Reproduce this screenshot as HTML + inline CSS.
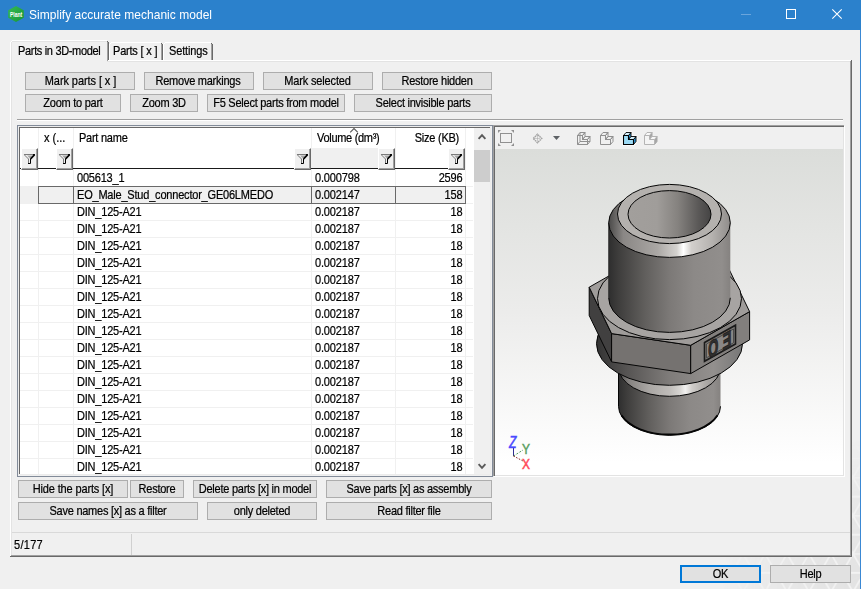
<!DOCTYPE html>
<html><head><meta charset="utf-8"><title>Simplify accurate mechanic model</title>
<style>
html,body{margin:0;padding:0;}
body{width:861px;height:589px;overflow:hidden;background:#f0f0f0;font-family:"Liberation Sans",sans-serif;font-size:11px;color:#000;position:relative;}
#w{position:absolute;left:0;top:0;width:861px;height:589px;overflow:hidden;background:#f0f0f0;}
#w div{position:absolute;box-sizing:content-box;}
#w svg{position:absolute;overflow:visible;}
.btn{background:#e1e1e1;border:1px solid #adadad;color:#000;}
.tx{line-height:13px;font-size:11px;white-space:pre;}
.t{display:inline-block;line-height:13px;transform:scaleY(1.19);transform-origin:0 10px;-webkit-text-stroke:0.2px currentColor;}
.fb{background:#f0f0f0;border-top:1px solid #fff;border-left:1px solid #fff;border-right:1px solid #696969;border-bottom:1px solid #696969;}
.fb:after{content:"";position:absolute;left:0;top:0;right:0;bottom:0;border-right:1px solid #a0a0a0;border-bottom:1px solid #a0a0a0;}
</style></head><body><div id="w">

<div style="left:0px;top:0px;width:861px;height:30px;background:#2b81cc;"></div>
<div style="left:860px;top:30px;width:1px;height:559px;background:#3a88d4;"></div>
<svg style="left:7px;top:5px" width="18" height="18" viewBox="0 0 18 18"><defs><linearGradient id="ig" x1="0" y1="0" x2="1" y2="1"><stop offset="0" stop-color="#36bb52"/><stop offset="1" stop-color="#169638"/></linearGradient></defs><polygon points="9,1 16.8,5.2 16.8,12.8 9,17 1.2,12.8 1.2,5.2" fill="url(#ig)"/><text x="3" y="11.9" font-family="Liberation Sans, sans-serif" font-size="6.4" font-weight="bold" fill="#fff" textLength="12.2" lengthAdjust="spacingAndGlyphs">Plant</text></svg>
<div class="tx" style="left:29px;top:8px;height:14px;font-size:12px;line-height:14px;letter-spacing:0.03px;color:#fff"><span class="t" style="line-height:14px;transform:scaleY(1.12);transform-origin:0 11px;-webkit-text-stroke:0">Simplify accurate mechanic model</span></div>
<div style="left:741px;top:14px;width:10px;height:1px;background:#6aa5dc;"></div>
<div style="left:786px;top:9px;width:8px;height:8px;border:1px solid #fff"></div>
<svg style="left:832px;top:9px" width="10" height="10" viewBox="0 0 10 10"><path d="M0.3,0.3 L9.7,9.7 M9.7,0.3 L0.3,9.7" stroke="#fff" stroke-width="1.1" fill="none"/></svg>
<svg style="left:721px;top:439px" width="139" height="150" viewBox="0 0 139 150"><defs><radialGradient id="wm" cx="1" cy="1" r="1"><stop offset="0" stop-color="#fff" stop-opacity="1"/><stop offset="0.55" stop-color="#fff" stop-opacity="0.6"/><stop offset="1" stop-color="#fff" stop-opacity="0"/></radialGradient><mask id="wmm"><rect width="139" height="150" fill="url(#wm)"/></mask><pattern id="tri" width="22" height="38.1" patternUnits="userSpaceOnUse"><path d="M0,0.5 H22 M0,19.55 H22 M0,0.5 L11,19.55 L22,0.5 M0,38.6 L11,19.55 L22,38.6" stroke="#f2f2f2" stroke-width="1.8" fill="none"/></pattern></defs><g mask="url(#wmm)"><rect width="139" height="150" fill="#e2e2e2"/><rect width="139" height="150" fill="url(#tri)"/></g></svg>
<div style="left:12px;top:62px;width:838px;height:493px;background:#f0f0f0;"></div>
<div style="left:10px;top:60px;width:841px;height:1px;background:#fff;"></div>
<div style="left:11px;top:61px;width:839px;height:1px;background:#e3e3e3;"></div>
<div style="left:10px;top:60px;width:1px;height:496px;background:#fff;"></div>
<div style="left:11px;top:61px;width:1px;height:494px;background:#e3e3e3;"></div>
<div style="left:850px;top:61px;width:1px;height:495px;background:#a0a0a0;"></div>
<div style="left:851px;top:60px;width:1px;height:497px;background:#696969;"></div>
<div style="left:11px;top:555px;width:840px;height:1px;background:#a0a0a0;"></div>
<div style="left:10px;top:556px;width:842px;height:1px;background:#696969;"></div>
<div style="left:10px;top:42px;width:1px;height:19px;background:#fff;"></div>
<div style="left:11px;top:41px;width:1px;height:1px;background:#fff;"></div>
<div style="left:12px;top:40px;width:95px;height:1px;background:#fff;"></div>
<div style="left:11px;top:42px;width:1px;height:20px;background:#e3e3e3;"></div>
<div style="left:12px;top:41px;width:95px;height:1px;background:#e3e3e3;"></div>
<div style="left:107px;top:42px;width:1px;height:19px;background:#a0a0a0;"></div>
<div style="left:108px;top:42px;width:1px;height:18px;background:#696969;"></div>
<div style="left:107px;top:41px;width:1px;height:1px;background:#696969;"></div>
<div style="left:12px;top:42px;width:95px;height:20px;background:#f0f0f0;"></div>
<div class="tx" style="left:18px;top:45px;height:13px;letter-spacing:-0.33px;color:#000;"><span class="t">Parts in 3D-model</span></div>
<div style="left:109px;top:44px;width:1px;height:16px;background:#fff;"></div>
<div style="left:110px;top:43px;width:1px;height:1px;background:#fff;"></div>
<div style="left:111px;top:42px;width:50px;height:1px;background:#fff;"></div>
<div style="left:161px;top:44px;width:1px;height:16px;background:#a0a0a0;"></div>
<div style="left:162px;top:44px;width:1px;height:16px;background:#696969;"></div>
<div style="left:161px;top:43px;width:1px;height:1px;background:#696969;"></div>
<div class="tx" style="left:113px;top:45px;height:13px;letter-spacing:-0.2px;color:#000;"><span class="t">Parts [ x ]</span></div>
<div style="left:163px;top:44px;width:1px;height:16px;background:#fff;"></div>
<div style="left:164px;top:43px;width:1px;height:1px;background:#fff;"></div>
<div style="left:165px;top:42px;width:46px;height:1px;background:#fff;"></div>
<div style="left:211px;top:44px;width:1px;height:16px;background:#a0a0a0;"></div>
<div style="left:212px;top:44px;width:1px;height:16px;background:#696969;"></div>
<div style="left:211px;top:43px;width:1px;height:1px;background:#696969;"></div>
<div class="tx" style="left:169px;top:45px;height:13px;letter-spacing:-0.15px;color:#000;"><span class="t">Settings</span></div>
<div class="btn" style="left:25px;top:72px;width:108px;height:16px;border:1px solid #adadad"><div class="tx" style="left:0.5px;top:2px;width:100%;height:13px;text-align:center;letter-spacing:-0.08px"><span class="t">Mark parts [ x ]</span></div></div>
<div class="btn" style="left:144px;top:72px;width:108px;height:16px;border:1px solid #adadad"><div class="tx" style="left:-1px;top:2px;width:100%;height:13px;text-align:center;letter-spacing:-0.25px"><span class="t">Remove markings</span></div></div>
<div class="btn" style="left:263px;top:72px;width:108px;height:16px;border:1px solid #adadad"><div class="tx" style="left:-0.5px;top:2px;width:100%;height:13px;text-align:center;letter-spacing:-0.15px"><span class="t">Mark selected</span></div></div>
<div class="btn" style="left:382px;top:72px;width:108px;height:16px;border:1px solid #adadad"><div class="tx" style="left:0px;top:2px;width:100%;height:13px;text-align:center;letter-spacing:-0.25px"><span class="t">Restore hidden</span></div></div>
<div class="btn" style="left:25px;top:94px;width:94px;height:16px;border:1px solid #adadad"><div class="tx" style="left:0px;top:2px;width:100%;height:13px;text-align:center;letter-spacing:-0.25px"><span class="t">Zoom to part</span></div></div>
<div class="btn" style="left:130px;top:94px;width:66px;height:16px;border:1px solid #adadad"><div class="tx" style="left:0px;top:2px;width:100%;height:13px;text-align:center;letter-spacing:-0.25px"><span class="t">Zoom 3D</span></div></div>
<div class="btn" style="left:207px;top:94px;width:136px;height:16px;border:1px solid #adadad"><div class="tx" style="left:0px;top:2px;width:100%;height:13px;text-align:center;letter-spacing:-0.25px"><span class="t">F5 Select parts from model</span></div></div>
<div class="btn" style="left:354px;top:94px;width:136px;height:16px;border:1px solid #adadad"><div class="tx" style="left:0px;top:2px;width:100%;height:13px;text-align:center;letter-spacing:-0.25px"><span class="t">Select invisible parts</span></div></div>
<div style="left:17px;top:119px;width:826px;height:1px;background:#a0a0a0;"></div>
<div style="left:17px;top:120px;width:826px;height:1px;background:#fff;"></div>
<div style="left:17px;top:125px;width:474px;height:350px;border:1px solid #828b99;background:#f0f0f0"></div>
<div style="left:18px;top:126px;width:473px;height:349px;background:#ececec;"></div>
<div style="left:19px;top:127px;width:471px;height:347px;background:#696969;"></div>
<div style="left:20px;top:128px;width:470px;height:346px;background:#fff;"></div>
<div id="g" style="left:20px;top:128px;width:470px;height:346px;overflow:hidden;background:#fff">
<div style="left:18px;top:0px;width:1px;height:346px;background:#f0f0f0;"></div>
<div style="left:53px;top:0px;width:1px;height:346px;background:#f0f0f0;"></div>
<div style="left:291px;top:0px;width:1px;height:346px;background:#f0f0f0;"></div>
<div style="left:375px;top:0px;width:1px;height:346px;background:#f0f0f0;"></div>
<div style="left:445px;top:0px;width:1px;height:346px;background:#f0f0f0;"></div>
<div style="left:0px;top:58px;width:453px;height:1px;background:#f0f0f0;"></div>
<div style="left:0px;top:75px;width:453px;height:1px;background:#f0f0f0;"></div>
<div style="left:0px;top:92px;width:453px;height:1px;background:#f0f0f0;"></div>
<div style="left:0px;top:109px;width:453px;height:1px;background:#f0f0f0;"></div>
<div style="left:0px;top:126px;width:453px;height:1px;background:#f0f0f0;"></div>
<div style="left:0px;top:143px;width:453px;height:1px;background:#f0f0f0;"></div>
<div style="left:0px;top:160px;width:453px;height:1px;background:#f0f0f0;"></div>
<div style="left:0px;top:177px;width:453px;height:1px;background:#f0f0f0;"></div>
<div style="left:0px;top:194px;width:453px;height:1px;background:#f0f0f0;"></div>
<div style="left:0px;top:211px;width:453px;height:1px;background:#f0f0f0;"></div>
<div style="left:0px;top:228px;width:453px;height:1px;background:#f0f0f0;"></div>
<div style="left:0px;top:245px;width:453px;height:1px;background:#f0f0f0;"></div>
<div style="left:0px;top:262px;width:453px;height:1px;background:#f0f0f0;"></div>
<div style="left:0px;top:279px;width:453px;height:1px;background:#f0f0f0;"></div>
<div style="left:0px;top:296px;width:453px;height:1px;background:#f0f0f0;"></div>
<div style="left:0px;top:313px;width:453px;height:1px;background:#f0f0f0;"></div>
<div style="left:0px;top:330px;width:453px;height:1px;background:#f0f0f0;"></div>
<div style="left:0px;top:347px;width:453px;height:1px;background:#f0f0f0;"></div>
<div style="left:291px;top:20px;width:84px;height:21px;background:#f0f0f0;"></div>
<div style="left:0px;top:40px;width:429px;height:1px;background:#1a1a1a;"></div>
<div class="fb" style="left:1px;top:20px;width:15px;height:20px"><svg style="left:2px;top:5px" width="12" height="11" viewBox="0 0 12 11"><polygon points="3.2,1.5 8.6,1.5 5.8,4.4" fill="#a6a6a6"/><path d="M0,0.5 H9.5 M0.4,0.9 L4.5,5 V9.5" fill="none" stroke="#7a7a7a" stroke-width="1"/><path d="M9,0.5 H11" stroke="#111" stroke-width="1" fill="none"/><path d="M10.6,0.6 L6.6,4.8" stroke="#000" stroke-width="1.7" fill="none"/><path d="M6.5,4.5 V9.5 H4" stroke="#000" stroke-width="1" fill="none"/></svg></div>
<div class="fb" style="left:36px;top:20px;width:15px;height:20px"><svg style="left:2px;top:5px" width="12" height="11" viewBox="0 0 12 11"><polygon points="3.2,1.5 8.6,1.5 5.8,4.4" fill="#a6a6a6"/><path d="M0,0.5 H9.5 M0.4,0.9 L4.5,5 V9.5" fill="none" stroke="#7a7a7a" stroke-width="1"/><path d="M9,0.5 H11" stroke="#111" stroke-width="1" fill="none"/><path d="M10.6,0.6 L6.6,4.8" stroke="#000" stroke-width="1.7" fill="none"/><path d="M6.5,4.5 V9.5 H4" stroke="#000" stroke-width="1" fill="none"/></svg></div>
<div class="fb" style="left:274px;top:20px;width:15px;height:20px"><svg style="left:2px;top:5px" width="12" height="11" viewBox="0 0 12 11"><polygon points="3.2,1.5 8.6,1.5 5.8,4.4" fill="#a6a6a6"/><path d="M0,0.5 H9.5 M0.4,0.9 L4.5,5 V9.5" fill="none" stroke="#7a7a7a" stroke-width="1"/><path d="M9,0.5 H11" stroke="#111" stroke-width="1" fill="none"/><path d="M10.6,0.6 L6.6,4.8" stroke="#000" stroke-width="1.7" fill="none"/><path d="M6.5,4.5 V9.5 H4" stroke="#000" stroke-width="1" fill="none"/></svg></div>
<div class="fb" style="left:358px;top:20px;width:15px;height:20px"><svg style="left:2px;top:5px" width="12" height="11" viewBox="0 0 12 11"><polygon points="3.2,1.5 8.6,1.5 5.8,4.4" fill="#a6a6a6"/><path d="M0,0.5 H9.5 M0.4,0.9 L4.5,5 V9.5" fill="none" stroke="#7a7a7a" stroke-width="1"/><path d="M9,0.5 H11" stroke="#111" stroke-width="1" fill="none"/><path d="M10.6,0.6 L6.6,4.8" stroke="#000" stroke-width="1.7" fill="none"/><path d="M6.5,4.5 V9.5 H4" stroke="#000" stroke-width="1" fill="none"/></svg></div>
<div class="fb" style="left:428px;top:20px;width:15px;height:20px"><svg style="left:2px;top:5px" width="12" height="11" viewBox="0 0 12 11"><polygon points="3.2,1.5 8.6,1.5 5.8,4.4" fill="#a6a6a6"/><path d="M0,0.5 H9.5 M0.4,0.9 L4.5,5 V9.5" fill="none" stroke="#7a7a7a" stroke-width="1"/><path d="M9,0.5 H11" stroke="#111" stroke-width="1" fill="none"/><path d="M10.6,0.6 L6.6,4.8" stroke="#000" stroke-width="1.7" fill="none"/><path d="M6.5,4.5 V9.5 H4" stroke="#000" stroke-width="1" fill="none"/></svg></div>
<div class="tx" style="left:24px;top:4px;height:13px;letter-spacing:0px;color:#000;"><span class="t">x (...</span></div>
<div class="tx" style="left:59px;top:4px;height:13px;letter-spacing:-0.25px;color:#000;"><span class="t">Part name</span></div>
<div class="tx" style="left:297px;top:4px;height:13px;letter-spacing:-0.3px;color:#000;"><span class="t">Volume (dm³)</span></div>
<div class="tx" style="left:380px;top:4px;height:13px;letter-spacing:-0.25px;color:#000;width:59px;text-align:right;"><span class="t">Size (KB)</span></div>
<svg style="left:329px;top:-1px" width="10" height="6" viewBox="0 0 10 6"><path d="M1.2,5.3 L5,1.5 L8.8,5.3" fill="none" stroke="#5a5a5a" stroke-width="1.1"/></svg>
<div class="tx" style="left:57px;top:44px;height:13px;letter-spacing:-0.2px;color:#000;"><span class="t">005613_1</span></div>
<div class="tx" style="left:295px;top:44px;height:13px;letter-spacing:-0.15px;color:#000;"><span class="t">0.000798</span></div>
<div class="tx" style="left:380px;top:44px;height:13px;letter-spacing:-0.15px;color:#000;width:62.5px;text-align:right;"><span class="t">2596</span></div>
<div style="left:0px;top:58px;width:18px;height:18px;background:#f0f0f0;"></div>
<div style="left:18px;top:58px;width:426px;height:16px;border:1px solid #696969;background:#f0f0f0"></div>
<div style="left:53px;top:59px;width:1px;height:16px;background:#696969;"></div>
<div style="left:291px;top:59px;width:1px;height:16px;background:#696969;"></div>
<div style="left:375px;top:59px;width:1px;height:16px;background:#696969;"></div>
<div class="tx" style="left:57px;top:61px;height:13px;letter-spacing:-0.2px;color:#000;"><span class="t">EO_Male_Stud_connector_GE06LMEDO</span></div>
<div class="tx" style="left:295px;top:61px;height:13px;letter-spacing:-0.15px;color:#000;"><span class="t">0.002147</span></div>
<div class="tx" style="left:380px;top:61px;height:13px;letter-spacing:-0.15px;color:#000;width:62.5px;text-align:right;"><span class="t">158</span></div>
<div class="tx" style="left:57px;top:78px;height:13px;letter-spacing:-0.2px;color:#000;"><span class="t">DIN_125-A21</span></div>
<div class="tx" style="left:295px;top:78px;height:13px;letter-spacing:-0.15px;color:#000;"><span class="t">0.002187</span></div>
<div class="tx" style="left:380px;top:78px;height:13px;letter-spacing:-0.15px;color:#000;width:62.5px;text-align:right;"><span class="t">18</span></div>
<div class="tx" style="left:57px;top:95px;height:13px;letter-spacing:-0.2px;color:#000;"><span class="t">DIN_125-A21</span></div>
<div class="tx" style="left:295px;top:95px;height:13px;letter-spacing:-0.15px;color:#000;"><span class="t">0.002187</span></div>
<div class="tx" style="left:380px;top:95px;height:13px;letter-spacing:-0.15px;color:#000;width:62.5px;text-align:right;"><span class="t">18</span></div>
<div class="tx" style="left:57px;top:112px;height:13px;letter-spacing:-0.2px;color:#000;"><span class="t">DIN_125-A21</span></div>
<div class="tx" style="left:295px;top:112px;height:13px;letter-spacing:-0.15px;color:#000;"><span class="t">0.002187</span></div>
<div class="tx" style="left:380px;top:112px;height:13px;letter-spacing:-0.15px;color:#000;width:62.5px;text-align:right;"><span class="t">18</span></div>
<div class="tx" style="left:57px;top:129px;height:13px;letter-spacing:-0.2px;color:#000;"><span class="t">DIN_125-A21</span></div>
<div class="tx" style="left:295px;top:129px;height:13px;letter-spacing:-0.15px;color:#000;"><span class="t">0.002187</span></div>
<div class="tx" style="left:380px;top:129px;height:13px;letter-spacing:-0.15px;color:#000;width:62.5px;text-align:right;"><span class="t">18</span></div>
<div class="tx" style="left:57px;top:146px;height:13px;letter-spacing:-0.2px;color:#000;"><span class="t">DIN_125-A21</span></div>
<div class="tx" style="left:295px;top:146px;height:13px;letter-spacing:-0.15px;color:#000;"><span class="t">0.002187</span></div>
<div class="tx" style="left:380px;top:146px;height:13px;letter-spacing:-0.15px;color:#000;width:62.5px;text-align:right;"><span class="t">18</span></div>
<div class="tx" style="left:57px;top:163px;height:13px;letter-spacing:-0.2px;color:#000;"><span class="t">DIN_125-A21</span></div>
<div class="tx" style="left:295px;top:163px;height:13px;letter-spacing:-0.15px;color:#000;"><span class="t">0.002187</span></div>
<div class="tx" style="left:380px;top:163px;height:13px;letter-spacing:-0.15px;color:#000;width:62.5px;text-align:right;"><span class="t">18</span></div>
<div class="tx" style="left:57px;top:180px;height:13px;letter-spacing:-0.2px;color:#000;"><span class="t">DIN_125-A21</span></div>
<div class="tx" style="left:295px;top:180px;height:13px;letter-spacing:-0.15px;color:#000;"><span class="t">0.002187</span></div>
<div class="tx" style="left:380px;top:180px;height:13px;letter-spacing:-0.15px;color:#000;width:62.5px;text-align:right;"><span class="t">18</span></div>
<div class="tx" style="left:57px;top:197px;height:13px;letter-spacing:-0.2px;color:#000;"><span class="t">DIN_125-A21</span></div>
<div class="tx" style="left:295px;top:197px;height:13px;letter-spacing:-0.15px;color:#000;"><span class="t">0.002187</span></div>
<div class="tx" style="left:380px;top:197px;height:13px;letter-spacing:-0.15px;color:#000;width:62.5px;text-align:right;"><span class="t">18</span></div>
<div class="tx" style="left:57px;top:214px;height:13px;letter-spacing:-0.2px;color:#000;"><span class="t">DIN_125-A21</span></div>
<div class="tx" style="left:295px;top:214px;height:13px;letter-spacing:-0.15px;color:#000;"><span class="t">0.002187</span></div>
<div class="tx" style="left:380px;top:214px;height:13px;letter-spacing:-0.15px;color:#000;width:62.5px;text-align:right;"><span class="t">18</span></div>
<div class="tx" style="left:57px;top:231px;height:13px;letter-spacing:-0.2px;color:#000;"><span class="t">DIN_125-A21</span></div>
<div class="tx" style="left:295px;top:231px;height:13px;letter-spacing:-0.15px;color:#000;"><span class="t">0.002187</span></div>
<div class="tx" style="left:380px;top:231px;height:13px;letter-spacing:-0.15px;color:#000;width:62.5px;text-align:right;"><span class="t">18</span></div>
<div class="tx" style="left:57px;top:248px;height:13px;letter-spacing:-0.2px;color:#000;"><span class="t">DIN_125-A21</span></div>
<div class="tx" style="left:295px;top:248px;height:13px;letter-spacing:-0.15px;color:#000;"><span class="t">0.002187</span></div>
<div class="tx" style="left:380px;top:248px;height:13px;letter-spacing:-0.15px;color:#000;width:62.5px;text-align:right;"><span class="t">18</span></div>
<div class="tx" style="left:57px;top:265px;height:13px;letter-spacing:-0.2px;color:#000;"><span class="t">DIN_125-A21</span></div>
<div class="tx" style="left:295px;top:265px;height:13px;letter-spacing:-0.15px;color:#000;"><span class="t">0.002187</span></div>
<div class="tx" style="left:380px;top:265px;height:13px;letter-spacing:-0.15px;color:#000;width:62.5px;text-align:right;"><span class="t">18</span></div>
<div class="tx" style="left:57px;top:282px;height:13px;letter-spacing:-0.2px;color:#000;"><span class="t">DIN_125-A21</span></div>
<div class="tx" style="left:295px;top:282px;height:13px;letter-spacing:-0.15px;color:#000;"><span class="t">0.002187</span></div>
<div class="tx" style="left:380px;top:282px;height:13px;letter-spacing:-0.15px;color:#000;width:62.5px;text-align:right;"><span class="t">18</span></div>
<div class="tx" style="left:57px;top:299px;height:13px;letter-spacing:-0.2px;color:#000;"><span class="t">DIN_125-A21</span></div>
<div class="tx" style="left:295px;top:299px;height:13px;letter-spacing:-0.15px;color:#000;"><span class="t">0.002187</span></div>
<div class="tx" style="left:380px;top:299px;height:13px;letter-spacing:-0.15px;color:#000;width:62.5px;text-align:right;"><span class="t">18</span></div>
<div class="tx" style="left:57px;top:316px;height:13px;letter-spacing:-0.2px;color:#000;"><span class="t">DIN_125-A21</span></div>
<div class="tx" style="left:295px;top:316px;height:13px;letter-spacing:-0.15px;color:#000;"><span class="t">0.002187</span></div>
<div class="tx" style="left:380px;top:316px;height:13px;letter-spacing:-0.15px;color:#000;width:62.5px;text-align:right;"><span class="t">18</span></div>
<div class="tx" style="left:57px;top:333px;height:13px;letter-spacing:-0.2px;color:#000;"><span class="t">DIN_125-A21</span></div>
<div class="tx" style="left:295px;top:333px;height:13px;letter-spacing:-0.15px;color:#000;"><span class="t">0.002187</span></div>
<div class="tx" style="left:380px;top:333px;height:13px;letter-spacing:-0.15px;color:#000;width:62.5px;text-align:right;"><span class="t">18</span></div>
<div style="left:454px;top:0px;width:16px;height:346px;background:#f0f0f0;"></div>
<div style="left:454px;top:22px;width:16px;height:32px;background:#cdcdcd;"></div>
<svg style="left:454px;top:0px" width="16" height="17" viewBox="0 0 16 17"><path d="M4.6,10.9 L8,7.2 L11.4,10.9" fill="none" stroke="#5a5a5a" stroke-width="1.9"/></svg>
<svg style="left:454px;top:329px" width="16" height="17" viewBox="0 0 16 17"><path d="M4.6,7.1 L8,10.8 L11.4,7.1" fill="none" stroke="#5a5a5a" stroke-width="1.9"/></svg>
</div>
<div style="left:493px;top:125px;width:351px;height:1px;background:#a0a0a0;"></div>
<div style="left:493px;top:125px;width:1px;height:351px;background:#a0a0a0;"></div>
<div style="left:494px;top:126px;width:350px;height:1px;background:#696969;"></div>
<div style="left:494px;top:126px;width:1px;height:350px;background:#696969;"></div>
<div style="left:495px;top:475px;width:349px;height:1px;background:#e3e3e3;"></div>
<div style="left:843px;top:127px;width:1px;height:349px;background:#e3e3e3;"></div>
<div style="left:494px;top:476px;width:351px;height:1px;background:#fff;"></div>
<div style="left:844px;top:126px;width:1px;height:351px;background:#fff;"></div>
<div style="left:495px;top:127px;width:348px;height:22px;background:#f0f0f0;"></div>
<div style="left:495px;top:149px;width:348px;height:326px;background:linear-gradient(#dbddda,#ececeb 50%,#ffffff 96%)"></div>
<svg style="left:495px;top:149px" width="348" height="326" viewBox="495 149 348 326">
<defs>
<linearGradient id="cyl" x1="0" x2="1" y1="0" y2="0"><stop offset="0" stop-color="#2e2e2e"/><stop offset="0.08" stop-color="#3e3d3c"/><stop offset="0.3" stop-color="#615f5d"/><stop offset="0.5" stop-color="#7c7977"/><stop offset="0.7" stop-color="#8c8987"/><stop offset="0.93" stop-color="#918e8c"/><stop offset="1" stop-color="#858280"/></linearGradient>
<linearGradient id="chm" x1="0" x2="1" y1="0" y2="0"><stop offset="0" stop-color="#4a4948"/><stop offset="0.12" stop-color="#8a8785"/><stop offset="0.4" stop-color="#aaa7a4"/><stop offset="0.56" stop-color="#d4d2cf"/><stop offset="0.615" stop-color="#ffffff"/><stop offset="0.68" stop-color="#d2cfcc"/><stop offset="0.85" stop-color="#b5b2af"/><stop offset="1" stop-color="#8f8c8a"/></linearGradient>
<linearGradient id="chm2" x1="0" x2="1" y1="0" y2="0"><stop offset="0" stop-color="#4a4948"/><stop offset="0.1" stop-color="#858280"/><stop offset="0.3" stop-color="#aaa7a4"/><stop offset="0.5" stop-color="#bfbcb9"/><stop offset="0.6" stop-color="#d6d4d1"/><stop offset="0.655" stop-color="#f2f1f0"/><stop offset="0.72" stop-color="#d0cdca"/><stop offset="0.85" stop-color="#aeaba8"/><stop offset="1" stop-color="#8f8c8a"/></linearGradient>
<linearGradient id="hole" x1="0" x2="1" y1="0" y2="0"><stop offset="0" stop-color="#a29f9c"/><stop offset="0.35" stop-color="#a09d9a"/><stop offset="0.6" stop-color="#85827f"/><stop offset="0.85" stop-color="#5a5857"/><stop offset="1" stop-color="#454444"/></linearGradient>
<linearGradient id="col" x1="0" x2="1" y1="0" y2="0"><stop offset="0" stop-color="#333"/><stop offset="0.2" stop-color="#555352"/><stop offset="0.5" stop-color="#7f7c7a"/><stop offset="0.8" stop-color="#93908e"/><stop offset="1" stop-color="#777"/></linearGradient>
</defs>
<path d="M618.5,347.3 V406.3 A51.0,29.0 0 0 0 720.5,406.3 V347.3 Z" fill="url(#cyl)"/>
<path d="M618.5,347.3 V406.3 A51.0,29.0 0 0 0 720.5,406.3" fill="none" stroke="#050505" stroke-width="1"/>
<path d="M621.5,415.3 A51.0,29.0 0 0 0 717.5,415.3" fill="none" stroke="#050505" stroke-width="1.8"/>
<path d="M618.5,342.3 V367.3 A51.0,29.0 0 0 0 720.5,367.3 V342.3 Z" fill="url(#chm2)"/>
<path d="M618.5,342.3 V367.3 A51.0,29.0 0 0 0 720.5,367.3" fill="none" stroke="#050505" stroke-width="1"/>
<polygon points="603,343.7 611.6,361.9 690.7,373.6 749.6,339.9 742.5,343.7" fill="url(#col)"/>
<ellipse cx="669.5" cy="343.7" rx="73.0" ry="41.6" fill="url(#col)" stroke="#050505" stroke-width="1"/>
<polygon points="589.2,287.2 611.6,333.6 611.6,361.90000000000003 589.2,315.5" fill="#414040" stroke="#050505" stroke-width="1" stroke-linejoin="round"/>
<polygon points="611.6,333.6 690.7,345.3 690.7,373.6 611.6,361.90000000000003" fill="#757270" stroke="#050505" stroke-width="1" stroke-linejoin="round"/>
<polygon points="690.7,345.3 749.6,311.6 749.6,339.90000000000003 690.7,373.6" fill="#827f7d" stroke="#050505" stroke-width="1" stroke-linejoin="round"/>
<polygon points="589.2,287.2 611.6,333.6 690.7,345.3 749.6,311.6 727.2,265.4 648.1,253.6" fill="#9f9c9a" stroke="#050505" stroke-width="1" stroke-linejoin="round"/>
<ellipse cx="669.5" cy="298.6" rx="72.0" ry="41.0" fill="#a7a4a2" stroke="#050505" stroke-width="1"/>
<polygon points="704.5,342.5 735.5,325.2 735.5,344 704.5,361.3" fill="#7c7977" stroke="#1a1a1a" stroke-width="1.6"/>
<polygon points="706.5,344 733.5,329 733.5,342.8 706.5,357.8" fill="#8a8785" stroke="#333" stroke-width="0.7"/>
<text transform="matrix(-0.55,0.305,0,1,731.3,346)" font-family="Liberation Sans, sans-serif" font-weight="bold" font-size="23.5" letter-spacing="8" fill="#333231" stroke="#242424" stroke-width="1.3">EO</text>
<path d="M608.7,222.8 V297.8 A60.8,34.6 0 0 0 730.3,297.8 V222.8 Z" fill="url(#cyl)"/>
<path d="M608.7,297.8 A60.8,34.6 0 0 0 730.3,297.8" fill="none" stroke="#050505" stroke-width="1"/>
<path d="M608.7,222.8 V297.8" fill="none" stroke="#222" stroke-width="0.8"/>
<ellipse cx="669.5" cy="222.8" rx="60.8" ry="34.6" fill="url(#chm)" stroke="#050505" stroke-width="1"/>
<ellipse cx="669.5" cy="214.0" rx="52.0" ry="29.6" fill="#b4b1ae" stroke="#050505" stroke-width="1"/>
<ellipse cx="669.5" cy="214.3" rx="41.5" ry="23.7" fill="url(#hole)" stroke="#050505" stroke-width="1"/>
<path d="M513.5,447 V456" stroke="#303090" stroke-width="1" fill="none"/>
<path d="M513.5,456 L523,450" stroke="#4f9a5a" stroke-width="1" stroke-dasharray="2,1.5" fill="none"/>
<path d="M513.5,456 L523,461" stroke="#8a2020" stroke-width="1" stroke-dasharray="1.5,1.5" fill="none"/>
<text x="509" y="447.5" font-family="Liberation Sans, sans-serif" font-size="17" font-style="italic" fill="#4a4aff" stroke="#4a4aff" stroke-width="0.5" textLength="7.5" lengthAdjust="spacingAndGlyphs">Z</text>
<text x="522" y="454" font-family="Liberation Sans, sans-serif" font-size="15" fill="#5a9f62" stroke="#5a9f62" stroke-width="0.5" textLength="8" lengthAdjust="spacingAndGlyphs">Y</text>
<text x="522" y="469" font-family="Liberation Sans, sans-serif" font-size="14.5" fill="#ff4a5a" stroke="#ff4a5a" stroke-width="0.5" textLength="8" lengthAdjust="spacingAndGlyphs">X</text>
</svg>
<svg style="left:495px;top:127px" width="348" height="22" viewBox="495 127 348 22">
<rect x="500.5" y="133.5" width="11" height="9" fill="none" stroke="#909090" stroke-width="1"/>
<polygon points="498,130 501,130 498,133" fill="#909090"/>
<polygon points="514,130 511,130 514,133" fill="#909090"/>
<polygon points="498,146 501,146 498,143" fill="#909090"/>
<polygon points="514,146 511,146 514,143" fill="#909090"/>
<g fill="none" stroke="#a4a4a4"><path d="M533.3,138.5 L537.5,134.3 L541.7,138.5 L537.5,142.7 Z" stroke-width="1.5" stroke-dasharray="1.6,0.6"/><path d="M537.5,135.5 V141.5 M534.5,138.5 H540.5" stroke-width="1" stroke-dasharray="1,1"/></g>
<polygon points="553,136 560,136 556.5,140" fill="#5e6266"/>
<path d="M577.5,135.5 L582.5,135.5 L582.5,139.5 L587.5,139.5 L587.5,144.5 L577.5,144.5 Z M577.5,135.5 L580.0,132.5 L585.0,132.5 L582.5,135.5 Z M582.5,139.5 L585.0,136.5 L590.0,136.5 L587.5,139.5 Z M587.5,139.5 L590.0,136.5 L590.0,141.5 L587.5,144.5 Z M582.5,135.5 L585.0,132.5 L585.0,136.5 L582.5,139.5 Z" fill="none" stroke="#909090" stroke-width="1" stroke-linejoin="round"/>
<path d="M580.0,132.5 L580.0,141.5 L590.0,141.5 M580.0,141.5 L577.5,144.5" fill="none" stroke="#909090" stroke-width="1" stroke-linejoin="round"/>
<path d="M600.5,135.5 L605.5,135.5 L605.5,139.5 L610.5,139.5 L610.5,144.5 L600.5,144.5 Z M600.5,135.5 L603.0,132.5 L608.0,132.5 L605.5,135.5 Z M605.5,139.5 L608.0,136.5 L613.0,136.5 L610.5,139.5 Z M610.5,139.5 L613.0,136.5 L613.0,141.5 L610.5,144.5 Z M605.5,135.5 L608.0,132.5 L608.0,136.5 L605.5,139.5 Z" fill="#f0f0f0" stroke="#909090" stroke-width="1" stroke-linejoin="round"/>
<path d="M623.5,135.5 L628.5,135.5 L628.5,139.5 L633.5,139.5 L633.5,144.5 L623.5,144.5 Z M623.5,135.5 L626.0,132.5 L631.0,132.5 L628.5,135.5 Z M628.5,139.5 L631.0,136.5 L636.0,136.5 L633.5,139.5 Z M633.5,139.5 L636.0,136.5 L636.0,141.5 L633.5,144.5 Z M628.5,135.5 L631.0,132.5 L631.0,136.5 L628.5,139.5 Z" fill="none" stroke="#fafafa" stroke-width="3" stroke-linejoin="round"/>
<path d="M633.5,139.5 L636.0,136.5 L636.0,141.5 L633.5,144.5 Z M628.5,135.5 L631.0,132.5 L631.0,136.5 L628.5,139.5 Z" fill="#2a8fca" stroke="#000" stroke-width="0.9" stroke-linejoin="round"/>
<path d="M623.5,135.5 L626.0,132.5 L631.0,132.5 L628.5,135.5 Z M628.5,139.5 L631.0,136.5 L636.0,136.5 L633.5,139.5 Z" fill="#d4effa" stroke="#000" stroke-width="0.9" stroke-linejoin="round"/>
<path d="M623.5,135.5 L628.5,135.5 L628.5,139.5 L633.5,139.5 L633.5,144.5 L623.5,144.5 Z" fill="#9cdaf4" stroke="#000" stroke-width="1.1" stroke-linejoin="round"/>
<path d="M654.5,139.5 L657.0,136.5 L657.0,141.5 L654.5,144.5 Z M649.5,135.5 L652.0,132.5 L652.0,136.5 L649.5,139.5 Z" fill="#a6a6a6" stroke="#a6a6a6" stroke-width="1" stroke-linejoin="round"/>
<path d="M644.5,135.5 L647.0,132.5 L652.0,132.5 L649.5,135.5 Z M649.5,139.5 L652.0,136.5 L657.0,136.5 L654.5,139.5 Z" fill="#f8f8f8" stroke="#b4b4b4" stroke-width="1" stroke-linejoin="round"/>
<path d="M644.5,135.5 L649.5,135.5 L649.5,139.5 L654.5,139.5 L654.5,144.5 L644.5,144.5 Z" fill="#f4f4f4" stroke="#b4b4b4" stroke-width="1" stroke-linejoin="round"/>
</svg>
<div class="btn" style="left:18px;top:480px;width:108px;height:16px;border:1px solid #adadad"><div class="tx" style="left:0px;top:2px;width:100%;height:13px;text-align:center;letter-spacing:-0.15px"><span class="t">Hide the parts [x]</span></div></div>
<div class="btn" style="left:130px;top:480px;width:52px;height:16px;border:1px solid #adadad"><div class="tx" style="left:0px;top:2px;width:100%;height:13px;text-align:center;letter-spacing:-0.25px"><span class="t">Restore</span></div></div>
<div class="btn" style="left:193px;top:480px;width:122px;height:16px;border:1px solid #adadad"><div class="tx" style="left:0px;top:2px;width:100%;height:13px;text-align:center;letter-spacing:-0.25px"><span class="t">Delete parts [x] in model</span></div></div>
<div class="btn" style="left:326px;top:480px;width:164px;height:16px;border:1px solid #adadad"><div class="tx" style="left:0px;top:2px;width:100%;height:13px;text-align:center;letter-spacing:-0.25px"><span class="t">Save parts [x] as assembly</span></div></div>
<div class="btn" style="left:18px;top:502px;width:178px;height:16px;border:1px solid #adadad"><div class="tx" style="left:0px;top:2px;width:100%;height:13px;text-align:center;letter-spacing:-0.25px"><span class="t">Save names [x] as a filter</span></div></div>
<div class="btn" style="left:207px;top:502px;width:108px;height:16px;border:1px solid #adadad"><div class="tx" style="left:0px;top:2px;width:100%;height:13px;text-align:center;letter-spacing:-0.25px"><span class="t">only deleted</span></div></div>
<div class="btn" style="left:326px;top:502px;width:164px;height:16px;border:1px solid #adadad"><div class="tx" style="left:0px;top:2px;width:100%;height:13px;text-align:center;letter-spacing:-0.25px"><span class="t">Read filter file</span></div></div>
<div style="left:12px;top:532px;width:838px;height:1px;background:#d9d9d9;"></div>
<div style="left:131px;top:534px;width:1px;height:21px;background:#d0d0d0;"></div>
<div class="tx" style="left:14px;top:539px;height:13px;letter-spacing:0.3px;color:#000;"><span class="t">5/177</span></div>
<div class="btn" style="left:680px;top:565px;width:77px;height:14px;border:2px solid #0078d7"><div class="tx" style="left:0px;top:1px;width:100%;height:13px;text-align:center;letter-spacing:-0.25px"><span class="t">OK</span></div></div>
<div class="btn" style="left:770px;top:565px;width:79px;height:16px;border:1px solid #adadad"><div class="tx" style="left:0px;top:2px;width:100%;height:13px;text-align:center;letter-spacing:-0.25px"><span class="t">Help</span></div></div>
</div></body></html>
